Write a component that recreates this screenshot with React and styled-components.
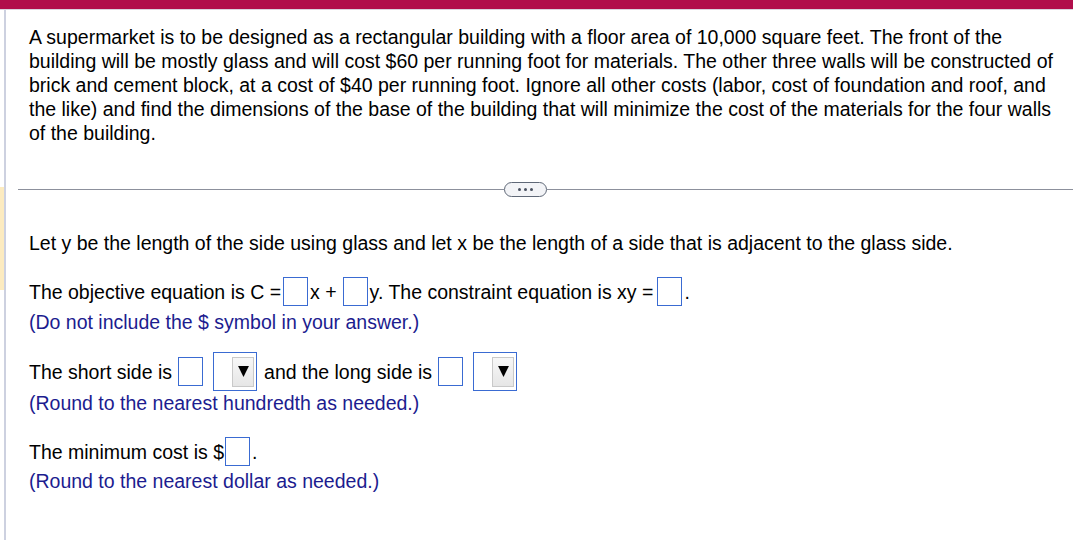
import React from 'react';
import styled, { createGlobalStyle } from 'styled-components';

const GlobalStyle = createGlobalStyle`
  html, body {
    margin: 0;
    padding: 0;
    background: #fff;
  }
  body {
    font-family: "Liberation Sans", Arial, sans-serif;
    font-size: 19.5px;
    color: #000;
  }
`;

const TopBar = styled.div`
  height: 9px;
  background: #b10e4b;
  border-bottom: 1px solid #d9d4de;
`;

const Frame = styled.div`
  display: flex;
  min-height: 530px;
`;

const Gutter = styled.div`
  width: 4px;
  flex: none;
  display: flex;
  flex-direction: column;
`;

const Highlight = styled.div`
  margin-top: 177px;
  height: 103px;
  background: #fcebc0;
`;

const Main = styled.div`
  flex: 1;
  border-left: 2px solid #cdd1e0;
  padding: 15px 13px 0 23px;
`;

const Problem = styled.p`
  margin: 0;
  line-height: 24px;
`;

const Divider = styled.div`
  display: flex;
  align-items: center;
  height: 14px;
  margin: 37px -13px 0 -11px;

  &::before,
  &::after {
    content: '';
    height: 1px;
    background: #8c909c;
  }
  &::before {
    flex: 486;
  }
  &::after {
    flex: 527;
  }
`;

const MoreButton = styled.button`
  width: 43px;
  height: 15px;
  padding: 0;
  border: 1px solid #5f6877;
  border-radius: 8px;
  background: #f3f4f7;
  display: flex;
  align-items: center;
  justify-content: center;
  gap: 3px;
`;

const Dot = styled.span`
  width: 3px;
  height: 3px;
  border-radius: 50%;
  background: #4a5160;
`;

const Line = styled.div`
  height: ${p => p.h || 24}px;
  line-height: ${p => p.h || 24}px;
  margin-top: ${p => p.mt || 0}px;
  white-space: nowrap;
  color: ${p => (p.hint ? '#1c1c8f' : '#000')};
`;

const Box = styled.span`
  display: inline-block;
  box-sizing: border-box;
  width: 25px;
  height: 29px;
  border: 1px solid #3a6bd2;
  background: #fff;
  vertical-align: middle;
  margin: -4px ${p => p.mr ?? 2}px 0 ${p => p.ml ?? 2}px;
`;

const Select = styled.span`
  display: inline-flex;
  box-sizing: border-box;
  width: 44px;
  height: 39px;
  border: 1px solid #3a6bd2;
  align-items: center;
  justify-content: flex-end;
  padding-right: 2px;
  vertical-align: middle;
  margin: -4px 7px 0 8px;
`;

const SelectButton = styled.span`
  box-sizing: border-box;
  width: 22px;
  height: 30px;
  border: 1px solid #c9c9c9;
  background: linear-gradient(#f7f7f7, #e6e6e6);
  display: flex;
  align-items: center;
  justify-content: center;
`;

const Arrow = () => (
  <svg width="13" height="13" viewBox="0 0 12 12">
    <path d="M1 1 H11 L6 11 Z" fill="#000" />
  </svg>
);

const Dropdown = () => (
  <Select>
    <SelectButton>
      <Arrow />
    </SelectButton>
  </Select>
);

export default function App() {
  return (
    <>
      <GlobalStyle />
      <TopBar />
      <Frame>
        <Gutter>
          <Highlight />
        </Gutter>
        <Main>
          <Problem>
            A supermarket is to be designed as a rectangular building with a floor area of 10,000 square feet. The front of the
            building will be mostly glass and will cost $60 per running foot for materials. The other three walls will be constructed of
            brick and cement block, at a cost of $40 per running foot. Ignore all other costs (labor, cost of foundation and roof, and
            the like) and find the dimensions of the base of the building that will minimize the cost of the materials for the four walls
            of the building.
          </Problem>

          <Divider>
            <MoreButton aria-label="more">
              <Dot />
              <Dot />
              <Dot />
            </MoreButton>
          </Divider>

          <Line mt={35}>
            Let y be the length of the side using glass and let x be the length of a side that is adjacent to the glass side.
          </Line>

          <Line h={30} mt={22}>
            The objective equation is C =<Box />x +<Box ml={6} />y. The constraint equation is xy =<Box ml={4} />.
          </Line>
          <Line hint mt={3}>(Do not include the $ symbol in your answer.)</Line>

          <Line h={38} mt={19}>
            The short side is<Box ml={6} />
            <Dropdown />
            and the long side is<Box ml={6} />
            <Dropdown />
          </Line>
          <Line hint>(Round to the nearest hundredth as needed.)</Line>

          <Line h={30} mt={22}>
            The minimum cost is $<Box ml={1} />.
          </Line>
          <Line hint mt={2}>(Round to the nearest dollar as needed.)</Line>
        </Main>
      </Frame>
    </>
  );
}
